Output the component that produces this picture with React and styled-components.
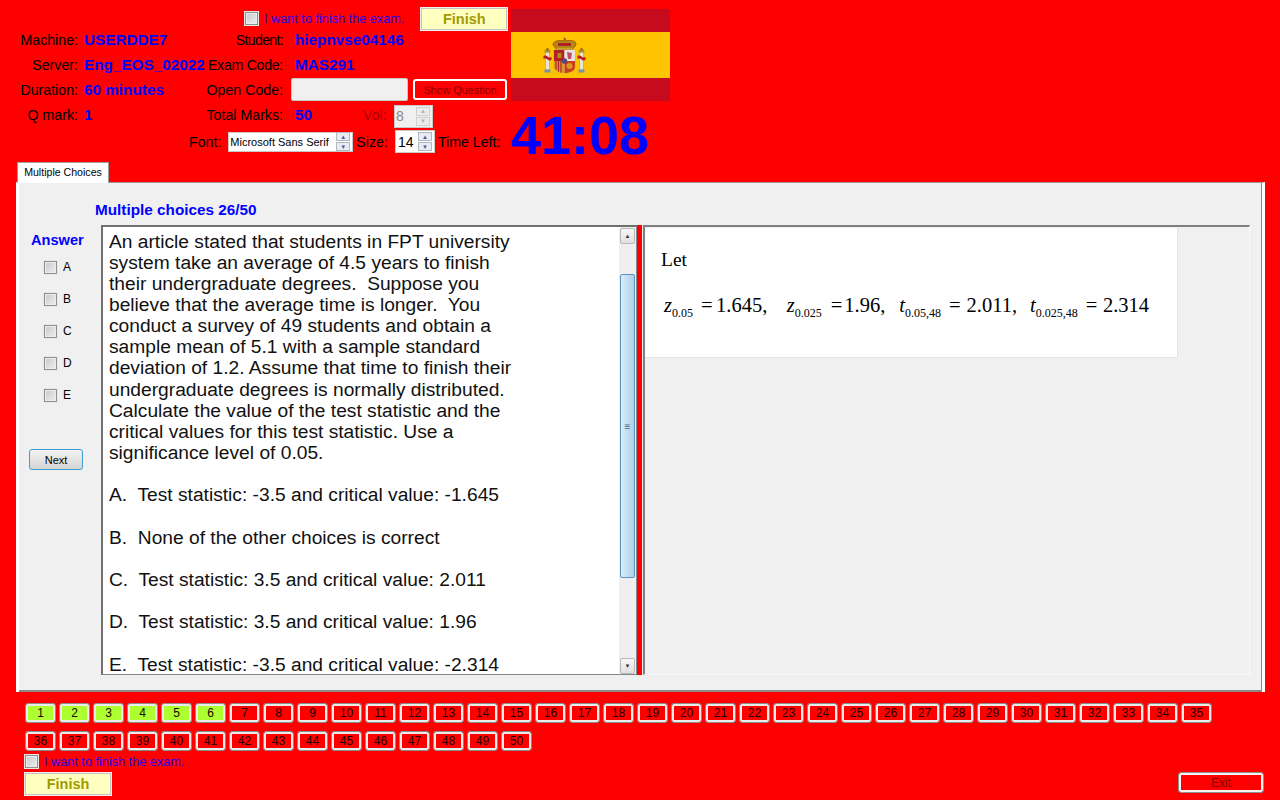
import React from "react";
import styled, { createGlobalStyle } from "styled-components";

const GlobalStyle = createGlobalStyle`
  html, body {
    margin: 0;
    padding: 0;
    background: #ff0000;
  }
`;

const questionLines = [
  "An article stated that students in FPT university",
  "system take an average of 4.5 years to finish",
  "their undergraduate degrees.  Suppose you",
  "believe that the average time is longer.  You",
  "conduct a survey of 49 students and obtain a",
  "sample mean of 5.1 with a sample standard",
  "deviation of 1.2. Assume that time to finish their",
  "undergraduate degrees is normally distributed.",
  "Calculate the value of the test statistic and the",
  "critical values for this test statistic. Use a",
  "significance level of 0.05.",
  "",
  "A.  Test statistic: -3.5 and critical value: -1.645",
  "",
  "B.  None of the other choices is correct",
  "",
  "C.  Test statistic: 3.5 and critical value: 2.011",
  "",
  "D.  Test statistic: 3.5 and critical value: 1.96",
  "",
  "E.  Test statistic: -3.5 and critical value: -2.314",
];

const answered = 6;
const questions = Array.from({ length: 50 }, (_, i) => i + 1);

const SpainFlag = () => (
  <FlagSvg viewBox="0 0 159 92">
    <rect width="159" height="92" fill="#c60b1e" />
    <rect y="23" width="159" height="46" fill="#ffc400" />
    {/* pillars */}
    {[36.5, 70.5].map((x) => (
      <g key={x}>
        <rect x={x - 2} y="43" width="4" height="18" fill="#e8e4d8" stroke="#a0a088" strokeWidth="0.6" />
        <rect x={x - 3} y="60.5" width="6" height="3" fill="#7f8fa8" />
        <rect x={x - 3} y="41.5" width="6" height="2" fill="#a89030" />
        <path d={`M${x - 2.5} 41.5 L${x} 38.5 L${x + 2.5} 41.5 Z`} fill="#9a6a10" />
        <path d={`M${x - 4} 47 C${x} 45 ${x} 50 ${x + 4} 48 L${x + 4} 51 C${x} 53 ${x} 48 ${x - 4} 50 Z`} fill="#b81c24" />
      </g>
    ))}
    {/* crown */}
    <path d="M42 36 C42 31 50 31 53 32 L53 29 L54 29 L55 32 C58 31 66 31 65 36 L61 41 L46 41 Z" fill="#b08a12" stroke="#8a1414" strokeWidth="0.5" />
    <rect x="47" y="34" width="13" height="3" fill="#b2202a" />
    <rect x="45.5" y="39" width="16" height="2" fill="#c9a227" />
    {/* shield */}
    <path d="M43 41 H64 V58 C64 62 58 64 53.5 64 C49 64 43 62 43 58 Z" fill="#f0e4d8" stroke="#a09070" strokeWidth="0.4" />
    <path d="M43 41 H53.5 V52 H43 Z" fill="#b2202a" />
    <rect x="46.5" y="44" width="4" height="5" fill="#b08a12" />
    <path d="M53.5 41 H64 V52 H53.5 Z" fill="#efe0e0" />
    <path d="M56 43 L61 44 L60 50 L57 50 Z" fill="#b8506a" />
    <path d="M43 52 H53.5 V64 C49 64 43 62 43 58 Z" fill="#d8a020" />
    <path d="M45 52 V60.5 M47.5 52 V62.5 M50 52 V63.5" stroke="#b2202a" strokeWidth="1.2" />
    <path d="M53.5 52 H64 V58 C64 62 58 64 53.5 64 Z" fill="#c8401c" />
    <circle cx="58.5" cy="57" r="3" fill="#d89a20" />
    <circle cx="53.5" cy="52" r="2.5" fill="#2a5a9a" stroke="#b2202a" strokeWidth="0.5" />
  </FlagSvg>
);

const Spinner = ({ disabled }) => (
  <SpinColumn>
    <SpinButton $disabled={disabled}>▲</SpinButton>
    <SpinButton $disabled={disabled}>▼</SpinButton>
  </SpinColumn>
);

const App = () => {
  return (
    <Page>
      <GlobalStyle />
      <Header>
        <HeaderLeft>
          <FinishRow>
            <CheckBox />
            <FinishLabel>I want to finish the exam.</FinishLabel>
            <FinishButton>Finish</FinishButton>
          </FinishRow>
          <InfoGrid>
            <Label>Machine:</Label>
            <Value>USERDDE7</Value>
            <Label $spacing={-0.7}>Student:</Label>
            <Value>hiepnvse04146</Value>
            <Label>Server:</Label>
            <Value>Eng_EOS_02022</Value>
            <Label $spacing={-0.3}>Exam Code:</Label>
            <Value>MAS291</Value>
            <Label>Duration:</Label>
            <Value>60 minutes</Value>
            <Label>Open Code:</Label>
            <OpenCodeCell>
              <OpenCodeInput />
              <ShowQuestion>Show Question</ShowQuestion>
            </OpenCodeCell>
            <Label>Q mark:</Label>
            <Value>1</Value>
            <Label>Total Marks:</Label>
            <MarksCell>
              <MarksValue>50</MarksValue>
              <VolLabel>Vol:</VolLabel>
              <VolBox>
                <span>8</span>
                <Spinner disabled />
              </VolBox>
            </MarksCell>
          </InfoGrid>
          <FontRow>
            <Label>Font:</Label>
            <FontBox>
              <span>Microsoft Sans Serif</span>
              <Spinner />
            </FontBox>
            <Label>Size:</Label>
            <SizeBox>
              <span>14</span>
              <Spinner />
            </SizeBox>
            <Label>Time Left:</Label>
          </FontRow>
        </HeaderLeft>
        <HeaderRight>
          <SpainFlag />
          <Timer>41:08</Timer>
        </HeaderRight>
      </Header>

      <TabStrip>
        <Tab>Multiple Choices</Tab>
      </TabStrip>
      <TabPanel>
        <PanelTitle>Multiple choices 26/50</PanelTitle>
        <PanelBody>
          <AnswerColumn>
            <AnswerTitle>Answer</AnswerTitle>
            {["A", "B", "C", "D", "E"].map((letter) => (
              <AnswerRow key={letter}>
                <CheckBox />
                <span>{letter}</span>
              </AnswerRow>
            ))}
            <NextButton>Next</NextButton>
          </AnswerColumn>
          <QuestionBox>
            <QuestionText>
              {questionLines.map((line, i) => (
                <QuestionLine key={i}>{line || "\u00a0"}</QuestionLine>
              ))}
            </QuestionText>
            <ScrollBar>
              <ScrollButton>▲</ScrollButton>
              <ScrollThumb>≡</ScrollThumb>
              <ScrollButton>▼</ScrollButton>
            </ScrollBar>
          </QuestionBox>
          <Splitter />
          <ImagePane>
            <ImageCard>
              <LetText>Let</LetText>
              <Formula>
                <i>z</i><Sub>0.05</Sub><Gap $w={8} />=<Gap $w={3.5} />1.645,<Gap $w={19.5} />
                <i>z</i><Sub>0.025</Sub><Gap $w={9} />=<Gap $w={2} />1.96,<Gap $w={14} />
                <i>t</i><Sub>0.05,48</Sub><Gap $w={8} />=<Gap $w={6} />2.011,<Gap $w={13} />
                <i>t</i><Sub>0.025,48</Sub><Gap $w={8} />=<Gap $w={5.5} />2.314
              </Formula>
            </ImageCard>
          </ImagePane>
        </PanelBody>
      </TabPanel>

      <Footer>
        <NumberGrid>
          {questions.map((n) => (
            <NumberButton key={n} $done={n <= answered}>{n}</NumberButton>
          ))}
        </NumberGrid>
        <BottomCheckRow>
          <CheckBox />
          <FinishLabel>I want to finish the exam.</FinishLabel>
        </BottomCheckRow>
        <BottomRow>
          <FinishButton>Finish</FinishButton>
          <ExitButton>Exit</ExitButton>
        </BottomRow>
      </Footer>
    </Page>
  );
};

const Page = styled.div`
  width: 1280px;
  height: 800px;
  overflow: hidden;
  background: #ff0000;
  font-family: "Liberation Sans", Arial, sans-serif;
  font-size: 13px;
  color: #000;
`;

const Header = styled.div`
  display: flex;
  height: 162px;
  padding-top: 7px;
  box-sizing: border-box;
`;

const HeaderLeft = styled.div`
  width: 511px;
  flex: none;
`;

const HeaderRight = styled.div`
  display: flex;
  flex-direction: column;
  padding-top: 2px;
`;

const FlagSvg = styled.svg`
  display: block;
  flex: none;
  width: 159px;
  height: 92px;
`;

const Timer = styled.div`
  flex: none;
  margin-top: 4px;
  font-size: 54px;
  line-height: 60px;
  font-weight: bold;
  color: #0000ff;
`;

const FinishRow = styled.div`
  display: flex;
  align-items: flex-start;
  height: 20px;
  padding-left: 245px;
`;

const CheckBox = styled.span`
  display: block;
  flex: none;
  width: 11px;
  height: 11px;
  border: 1px solid #8e8f8f;
  box-shadow: inset 0 0 0 1px #ececec;
  background: linear-gradient(135deg, #c8c9cb, #eeeef0);
  outline: 1px solid #e8e8e8;
  outline-offset: 0;
  ${FinishRow} & {
    margin-top: 5px;
  }
`;

const FinishLabel = styled.span`
  margin-left: 6px;
  color: #2400e6;
  font-size: 12.7px;
  line-height: 24px;
  white-space: nowrap;
`;

const FinishButton = styled.div`
  box-sizing: border-box;
  width: 88px;
  height: 24px;
  display: flex;
  align-items: center;
  justify-content: center;
  background: #ffffc0;
  border: 2px solid #c4c4c4;
  outline: 1px solid #f0f0f0;
  outline-offset: -1px;
  color: #a09a00;
  font-weight: bold;
  font-size: 14.5px;
  ${FinishRow} & {
    margin-left: 16px;
  }
`;

const InfoGrid = styled.div`
  display: grid;
  grid-template-columns: 78px 123px 82px 1fr;
  grid-auto-rows: 25px;
  align-items: center;
  column-gap: 0;
`;

const Label = styled.span`
  font-size: 14.2px;
  letter-spacing: ${(p) => p.$spacing || 0}px;
  text-align: right;
  white-space: nowrap;
  color: #000;
`;

const Value = styled.span`
  margin-left: 6px;
  font-size: 15.3px;
  font-weight: bold;
  color: #0000ff;
  white-space: nowrap;
  &:nth-child(4n) {
    margin-left: 12px;
  }
`;

const OpenCodeCell = styled.div`
  box-sizing: border-box;
  display: flex;
  align-items: flex-start;
  height: 25px;
  padding: 1px 0 0 8px;
`;

const OpenCodeInput = styled.div`
  box-sizing: border-box;
  width: 117px;
  height: 23px;
  background: #f0f0f0;
  border: 1px solid #c8c8c8;
  border-radius: 2px;
`;

const ShowQuestion = styled.div`
  box-sizing: border-box;
  width: 94px;
  height: 21px;
  margin: 1px 0 0 5px;
  display: flex;
  align-items: center;
  justify-content: center;
  border: 2px solid #fff;
  border-radius: 3px;
  background: #ff0000;
  color: #800000;
  font-size: 10.8px;
`;

const MarksCell = styled.div`
  display: flex;
  align-items: center;
  margin-left: 12px;
`;

const MarksValue = styled.span`
  width: 68px;
  font-size: 15.3px;
  font-weight: bold;
  color: #0000ff;
`;

const VolLabel = styled.span`
  width: 31px;
  font-size: 14.2px;
  color: #a80000;
`;

const SpinColumn = styled.div`
  display: flex;
  flex-direction: column;
  gap: 1px;
  margin-left: auto;
`;

const SpinButton = styled.div`
  width: 14px;
  height: 9px;
  display: flex;
  align-items: center;
  justify-content: center;
  box-sizing: border-box;
  border: 1px solid ${(p) => (p.$disabled ? "#d0d0d0" : "#b0b8c4")};
  background: ${(p) => (p.$disabled ? "#ececec" : "#e8ecf2")};
  color: ${(p) => (p.$disabled ? "#b0b0b0" : "#4a5a90")};
  font-size: 6px;
  line-height: 1;
`;

const SpinBox = styled.div`
  box-sizing: border-box;
  display: flex;
  align-items: center;
  padding: 0 2px 0 1px;
  border: 1px solid #c8c8c8;
  font-size: 11px;
  white-space: nowrap;
`;

const VolBox = styled(SpinBox)`
  width: 39px;
  height: 23px;
  margin-top: 3px;
  background: #f0f0f0;
  color: #8a8a8a;
  font-size: 14px;
`;

const FontRow = styled.div`
  display: flex;
  align-items: center;
  height: 29px;
  padding-left: 189px;
`;

const FontBox = styled(SpinBox)`
  width: 125px;
  height: 20px;
  margin: 0 3px 0 7px;
  background: #fff;
`;

const SizeBox = styled(SpinBox)`
  width: 40px;
  height: 23px;
  margin: 0 3px 0 7px;
  padding-left: 2px;
  background: #fff;
  font-size: 14px;
`;

const TabStrip = styled.div`
  display: flex;
  padding-left: 17px;
  height: 21px;
`;

const Tab = styled.div`
  box-sizing: border-box;
  width: 92px;
  height: 21px;
  background: #fff;
  border: 1px solid #a0a0a0;
  border-bottom: 0;
  text-align: center;
  line-height: 19px;
  font-size: 10.6px;
`;

const TabPanel = styled.div`
  box-sizing: border-box;
  width: 1249px;
  height: 510px;
  margin: -1px 0 0 16px;
  padding: 0 12px 17px 3px;
  background: #f0f0f0;
  border-top: 1px solid #9a9a9a;
  border-left: 3px solid #fff;
  border-right: 3px solid #fff;
  box-shadow: inset -1px -2px 0 #8a8a8a;
  display: flex;
  flex-direction: column;
`;

const PanelTitle = styled.div`
  height: 42px;
  padding: 18px 0 0 73px;
  box-sizing: border-box;
  font-size: 15.3px;
  line-height: 18px;
  font-weight: bold;
  color: #0000ff;
`;

const PanelBody = styled.div`
  display: flex;
  flex: 1;
  min-height: 0;
`;

const AnswerColumn = styled.div`
  width: 79px;
  flex: none;
  padding-left: 4px;
  box-sizing: border-box;
`;

const AnswerTitle = styled.div`
  height: 26px;
  padding-top: 7px;
  box-sizing: border-box;
  padding-left: 5px;
  font-size: 14.6px;
  line-height: 16px;
  font-weight: bold;
  color: #0000ff;
`;

const AnswerRow = styled.div`
  display: flex;
  align-items: center;
  height: 32px;
  padding-left: 18px;
  gap: 6px;
  font-size: 12px;
`;

const NextButton = styled.div`
  box-sizing: border-box;
  width: 54px;
  height: 21px;
  margin: 38px 0 0 3px;
  display: flex;
  align-items: center;
  justify-content: center;
  border: 1px solid #3c9dd0;
  border-radius: 3px;
  background: linear-gradient(#f4f4f4, #d4d4d4);
  font-size: 11px;
`;

const QuestionBox = styled.div`
  box-sizing: border-box;
  width: 536px;
  flex: none;
  display: flex;
  background: #fff;
  border: 1px solid #828790;
  border-top: 2px solid #707070;
  border-left: 2px solid #707070;
  overflow: hidden;
`;

const QuestionText = styled.div`
  flex: 1;
  padding: 3.5px 0 0 6px;
  font-size: 19.2px;
  line-height: 21.15px;
  color: #111;
  overflow: hidden;
`;

const QuestionLine = styled.div`
  white-space: pre;
`;

const ScrollBar = styled.div`
  width: 17px;
  flex: none;
  display: flex;
  flex-direction: column;
  align-items: center;
  background: #efefef;
`;

const ScrollButton = styled.div`
  box-sizing: border-box;
  width: 15px;
  height: 16px;
  margin-top: 1px;
  flex: none;
  display: flex;
  align-items: center;
  justify-content: center;
  border: 1px solid #b8b8b8;
  border-radius: 2px;
  background: linear-gradient(#f8f8f8, #e0e0e0);
  font-size: 6px;
  color: #333;
`;

const ScrollThumb = styled.div`
  box-sizing: border-box;
  width: 15px;
  height: 304px;
  margin: 30px 0 auto;
  display: flex;
  align-items: center;
  justify-content: center;
  border: 1px solid #5f95bd;
  border-radius: 2px;
  background: linear-gradient(90deg, #dcecf8, #a9d0ec);
  font-size: 10px;
  color: #4a6a85;
`;

const Splitter = styled.div`
  width: 5px;
  flex: none;
  background: #ff0000;
`;

const ImagePane = styled.div`
  flex: 1;
  box-sizing: border-box;
  margin-left: 1px;
  padding-top: 1px;
  border-top: 2px solid #808080;
  border-left: 2px solid #808080;
  border-right: 1px solid #fafafa;
  border-bottom: 1px solid #fafafa;
`;

const ImageCard = styled.div`
  box-sizing: border-box;
  width: 533px;
  height: 130px;
  background: #fff;
  border-right: 1px solid #e4e4e4;
  border-bottom: 1px solid #e4e4e4;
  padding: 22px 0 0 16px;
  font-family: "Liberation Serif", "Times New Roman", serif;
  color: #000;
`;

const LetText = styled.div`
  font-size: 19.5px;
  line-height: 20px;
`;

const Formula = styled.div`
  margin: 22px 0 0 3px;
  font-size: 20.5px;
  line-height: 26px;
  white-space: nowrap;
`;

const Sub = styled.sub`
  font-size: 12px;
  line-height: 0;
  vertical-align: -5px;
`;

const Gap = styled.span`
  display: inline-block;
  width: ${(p) => p.$w}px;
`;

const Footer = styled.div`
  padding: 11px 16px 0 24px;
`;

const NumberGrid = styled.div`
  display: grid;
  grid-template-columns: repeat(35, 31px);
  column-gap: 3px;
  row-gap: 8px;
  grid-auto-rows: 20px;
  padding-left: 1px;
`;

const NumberButton = styled.div`
  box-sizing: border-box;
  display: flex;
  align-items: center;
  justify-content: center;
  background: ${(p) => (p.$done ? "#adff2f" : "#ff0000")};
  border: 1px solid #8c8c8c;
  border-radius: 3px;
  box-shadow: inset 0 0 0 2px #ececec;
  font-size: 12px;
  color: #1a0000;
`;

const BottomCheckRow = styled.div`
  display: flex;
  align-items: center;
  height: 19px;
  margin-top: 1px;
  padding-left: 1px;
`;

const BottomRow = styled.div`
  display: flex;
  justify-content: space-between;
  align-items: flex-start;
  margin-top: 1px;
`;

const ExitButton = styled.div`
  box-sizing: border-box;
  width: 86px;
  height: 21px;
  display: flex;
  align-items: center;
  justify-content: center;
  border: 1px solid #909090;
  border-radius: 3px;
  box-shadow: inset 0 0 0 2px #f4f4f4;
  color: #800000;
  font-size: 12px;
`;

export default App;
